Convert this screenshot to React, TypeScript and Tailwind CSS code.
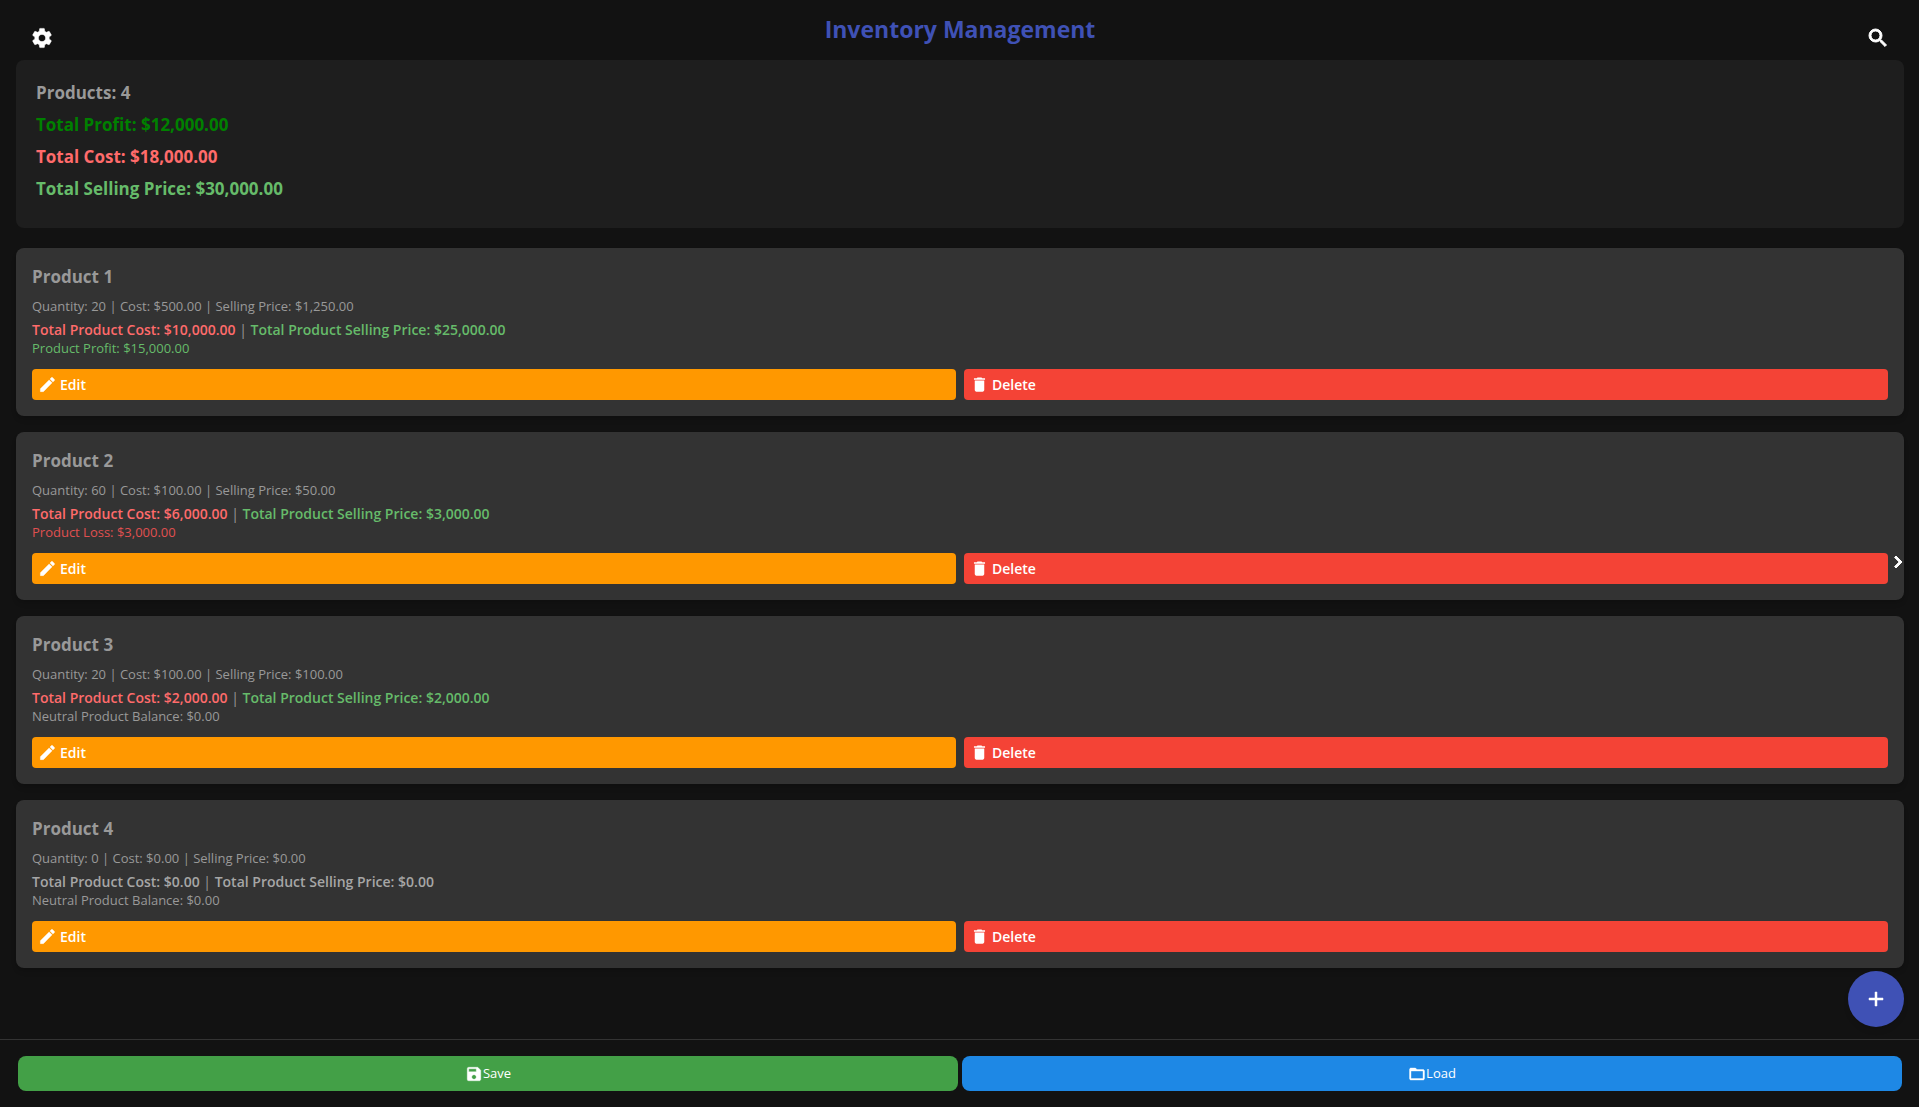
import { useState } from 'react'
import { MdAdd, MdChevronRight, MdDelete, MdEdit, MdFolderOpen, MdSave, MdSearch, MdSettings } from 'react-icons/md'

interface Product {
  id: number
  name: string
  quantity: number
  cost: number
  price: number
}

const PRODUCTS: Product[] = [
  { id: 1, name: 'Product 1', quantity: 20, cost: 500, price: 1250 },
  { id: 2, name: 'Product 2', quantity: 60, cost: 100, price: 50 },
  { id: 3, name: 'Product 3', quantity: 20, cost: 100, price: 100 },
  { id: 4, name: 'Product 4', quantity: 0, cost: 0, price: 0 },
]

const money = (n: number) =>
  '$' + n.toLocaleString('en-US', { minimumFractionDigits: 2, maximumFractionDigits: 2 })

function Balance({ value }: { value: number }) {
  if (value > 0) return <p className="text-[#66bb6a]">Product Profit: {money(value)}</p>
  if (value < 0) return <p className="text-[#e05050]">Product Loss: {money(-value)}</p>
  return <p>Neutral Product Balance: {money(0)}</p>
}

function ProductCard({ product, onDelete }: { product: Product; onDelete: () => void }) {
  const cost = product.quantity * product.cost
  const selling = product.quantity * product.price

  return (
    <li className="rounded-lg bg-[#333333] p-4 text-[13px] leading-[19px] text-[#999999] shadow-md">
      <h2 className="mb-[7px] text-[17px] leading-[25px] font-bold">{product.name}</h2>
      <p className="mb-1 leading-5">
        Quantity: {product.quantity} | Cost: {money(product.cost)} | Selling Price: {money(product.price)}
      </p>
      <p className="text-sm leading-[19px]">
        <strong className={`font-semibold ${cost > 0 ? 'text-[#ff6b6b]' : 'text-[#a6a6a6]'}`}>
          Total Product Cost: {money(cost)}
        </strong>
        {' | '}
        <strong className={`font-semibold ${selling > 0 ? 'text-[#66bb6a]' : 'text-[#a6a6a6]'}`}>
          Total Product Selling Price: {money(selling)}
        </strong>
      </p>
      <Balance value={selling - cost} />
      <div className="mt-[11px] flex gap-2 text-sm leading-[19px] font-semibold text-white">
        <button className="flex flex-1 items-center gap-[3px] rounded bg-[#ff9800] px-1.5 py-1.5">
          <MdEdit size={19} strokeWidth={0.5} />
          Edit
        </button>
        <button onClick={onDelete} className="flex flex-1 items-center gap-[3px] rounded bg-[#f44336] px-1.5 py-1.5">
          <MdDelete size={19} />
          Delete
        </button>
      </div>
    </li>
  )
}

export default function App() {
  const [products, setProducts] = useState(PRODUCTS)

  const totalCost = products.reduce((sum, p) => sum + p.quantity * p.cost, 0)
  const totalSelling = products.reduce((sum, p) => sum + p.quantity * p.price, 0)

  return (
    <div className="flex min-h-screen flex-col bg-[#121212] font-['Open_Sans','Noto_Sans',sans-serif] [&_path[fill=none]]:stroke-none">
      {/* Header */}
      <header className="flex h-15 items-start justify-between pr-[29px] pl-[30px]">
        <button aria-label="Settings" className="mt-[26px] text-white">
          <MdSettings size={24} strokeWidth={0.5} />
        </button>
        <h1 className="mt-[13px] text-[23px] leading-8 font-bold text-[#3f51b5]">Inventory Management</h1>
        <button aria-label="Search" className="mt-[26px] text-white">
          <MdSearch size={24} strokeWidth={1} />
        </button>
      </header>

      <main className="grow pr-[15px] pb-16 pl-4">
        {/* Totals */}
        <section className="mb-5 flex flex-col gap-[7px] rounded-lg bg-[#1e1e1e] px-5 pt-5 pb-[27px] text-[17px] leading-[25px] font-bold">
          <p className="text-[#999999]">Products: {products.length}</p>
          <p className="text-[#008000]">Total Profit: {money(totalSelling - totalCost)}</p>
          <p className="text-[#ff6b6b]">Total Cost: {money(totalCost)}</p>
          <p className="text-[#66bb6a]">Total Selling Price: {money(totalSelling)}</p>
        </section>

        <ul className="flex flex-col gap-4">
          {products.map(p => (
            <ProductCard
              key={p.id}
              product={p}
              onDelete={() => setProducts(products.filter(other => other.id !== p.id))}
            />
          ))}
        </ul>
      </main>

      {/* Floating controls */}
      <button aria-label="Next page" className="fixed top-[550px] right-[9px] text-white">
        <MdChevronRight size={24} strokeWidth={1} />
      </button>
      <button
        aria-label="Add product"
        className="fixed right-[15px] bottom-20 z-10 flex size-14 items-center justify-center rounded-full bg-[#3f51b5] text-white shadow-md"
      >
        <MdAdd size={24} strokeWidth={0.5} />
      </button>

      {/* Footer */}
      <footer className="sticky bottom-0 flex gap-1 border-t border-[#333333] bg-[#121212] pt-4 pr-[17px] pb-4 pl-[18px] text-[13px] leading-[19px] text-white">
        <button className="flex flex-1 items-center justify-center rounded-lg bg-[#43a047] py-2">
          <MdSave size={18} strokeWidth={0.5} />
          Save
        </button>
        <button className="flex flex-1 items-center justify-center rounded-lg bg-[#1e88e5] py-2">
          <MdFolderOpen size={18} strokeWidth={0.5} />
          Load
        </button>
      </footer>
    </div>
  )
}
